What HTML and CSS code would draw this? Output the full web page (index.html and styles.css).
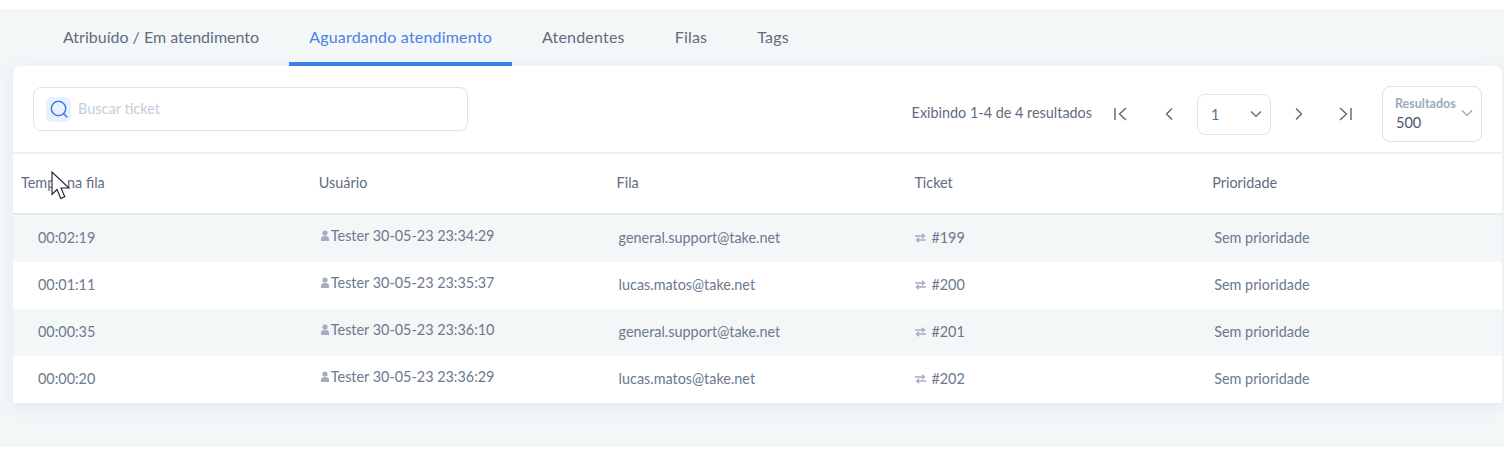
FILE: index.html
```html
<!DOCTYPE html>
<html lang="pt-BR">
<head>
<meta charset="utf-8">
<title>Tickets</title>
<link rel="stylesheet" href="styles.css">
</head>
<body>
<main class="page">
  <nav class="tabs">
    <a class="tab tab-first">Atribuído / Em atendimento</a>
    <a class="tab active">Aguardando atendimento</a>
    <a class="tab">Atendentes</a>
    <a class="tab">Filas</a>
    <a class="tab">Tags</a>
  </nav>
  <section class="card">
    <div class="toolbar">
      <label class="search">
        <span class="search-icon"><svg width="20" height="20" viewBox="0 0 20 20" fill="none" stroke="#3f7de8" stroke-width="1.5"><circle cx="9.5" cy="9.5" r="7.2"/><path d="M14.7 14.7 18 18" stroke-linecap="round"/></svg></span>
        <span class="placeholder">Buscar ticket</span>
      </label>
      <div class="pager">
        <span class="count">Exibindo 1-4 de 4 resultados</span>
        <svg class="pg first" width="16" height="16" viewBox="0 0 16 16" fill="none" stroke="#56657a" stroke-width="1.4"><path d="M2 2v12M13 2 6.500 8l6.500 6"/></svg>
        <svg class="pg prev" width="16" height="16" viewBox="0 0 16 16" fill="none" stroke="#56657a" stroke-width="1.4"><path d="M11 2.500 5.500 8l5.500 5.500"/></svg>
        <div class="page-select"><span>1</span><svg width="12" height="8" viewBox="0 0 12 8" fill="none" stroke="#56657a" stroke-width="1.200"><path d="m1 1.500 5 5 5-5"/></svg></div>
        <svg class="pg next" width="16" height="16" viewBox="0 0 16 16" fill="none" stroke="#56657a" stroke-width="1.4"><path d="m5 2.500 5.500 5.500L5 13.500"/></svg>
        <svg class="pg last" width="16" height="16" viewBox="0 0 16 16" fill="none" stroke="#56657a" stroke-width="1.4"><path d="M14 2v12M3 2l6.500 6L3 14"/></svg>
        <div class="results">
          <div class="results-text"><span class="results-label">Resultados</span><span class="results-value">500</span></div>
          <svg class="results-chevron" width="12" height="8" viewBox="0 0 12 8" fill="none" stroke="#8ea0b8" stroke-width="1.100"><path d="m1 1.500 5 5 5-5"/></svg>
        </div>
      </div>
    </div>
    <div class="thead">
      <div>Tempo na fila</div><div>Usuário</div><div>Fila</div><div>Ticket</div><div>Prioridade</div>
    </div>
    <div class="row">
      <div class="time">00:02:19</div>
      <div class="user"><svg class="uicon" width="10" height="11" viewBox="0 0 10 11" fill="#a3aec4"><circle cx="5" cy="3" r="2.600"/><path d="M1 11V8.500C1 6.800 2.500 6 5 6s4 .8 4 2.500V11z"/></svg>Tester 30-05-23 23:34:29</div>
      <div class="queue">general.support@take.net</div>
      <div class="ticket"><svg class="ticon" width="11" height="10" viewBox="0 0 11 10" fill="none" stroke="#a3aec4" stroke-width="1.400"><path d="M0 3h9M7 .8 9.400 3 7 5.200M11 7H2M4 4.800 1.600 7 4 9.200"/></svg>#199</div>
      <div class="prio">Sem prioridade</div>
    </div>
    <div class="row">
      <div class="time">00:01:11</div>
      <div class="user"><svg class="uicon" width="10" height="11" viewBox="0 0 10 11" fill="#a3aec4"><circle cx="5" cy="3" r="2.600"/><path d="M1 11V8.500C1 6.800 2.500 6 5 6s4 .8 4 2.500V11z"/></svg>Tester 30-05-23 23:35:37</div>
      <div class="queue">lucas.matos@take.net</div>
      <div class="ticket"><svg class="ticon" width="11" height="10" viewBox="0 0 11 10" fill="none" stroke="#a3aec4" stroke-width="1.400"><path d="M0 3h9M7 .8 9.400 3 7 5.200M11 7H2M4 4.800 1.600 7 4 9.200"/></svg>#200</div>
      <div class="prio">Sem prioridade</div>
    </div>
    <div class="row">
      <div class="time">00:00:35</div>
      <div class="user"><svg class="uicon" width="10" height="11" viewBox="0 0 10 11" fill="#a3aec4"><circle cx="5" cy="3" r="2.600"/><path d="M1 11V8.500C1 6.800 2.500 6 5 6s4 .8 4 2.500V11z"/></svg>Tester 30-05-23 23:36:10</div>
      <div class="queue">general.support@take.net</div>
      <div class="ticket"><svg class="ticon" width="11" height="10" viewBox="0 0 11 10" fill="none" stroke="#a3aec4" stroke-width="1.400"><path d="M0 3h9M7 .8 9.400 3 7 5.200M11 7H2M4 4.800 1.600 7 4 9.200"/></svg>#201</div>
      <div class="prio">Sem prioridade</div>
    </div>
    <div class="row">
      <div class="time">00:00:20</div>
      <div class="user"><svg class="uicon" width="10" height="11" viewBox="0 0 10 11" fill="#a3aec4"><circle cx="5" cy="3" r="2.600"/><path d="M1 11V8.500C1 6.800 2.500 6 5 6s4 .8 4 2.500V11z"/></svg>Tester 30-05-23 23:36:29</div>
      <div class="queue">lucas.matos@take.net</div>
      <div class="ticket"><svg class="ticon" width="11" height="10" viewBox="0 0 11 10" fill="none" stroke="#a3aec4" stroke-width="1.400"><path d="M0 3h9M7 .8 9.400 3 7 5.200M11 7H2M4 4.800 1.600 7 4 9.200"/></svg>#202</div>
      <div class="prio">Sem prioridade</div>
    </div>
  </section>
  <svg class="cursor" width="19" height="29" viewBox="0 0 19 29"><path d="M1 1v22.500l5-5 3.800 9 4-1.800-3.800-8.700H18z" fill="#fff" stroke="#1c2026" stroke-width="1.100" stroke-linejoin="miter"/></svg>
</main>
</body>
</html>
```

FILE: styles.css
```css
* { box-sizing: border-box; }
html, body { margin: 0; background: #fff; }
body {
  padding: 9px 0 2px;
  height: 449px;
  overflow: hidden;
  font-family: "Lato", "Noto Sans", sans-serif;
  color: #5f6d80;
}
.page {
  position: relative;
  height: 438px;
  background: #f4f7f8;
  padding: 0 2px 0 13px;
}
.tabs {
  display: flex;
  height: 57px;
  padding-left: 30px;
  align-items: stretch;
}
.tab {
  padding: 18px 20px 0;
  font-size: 16px;
  line-height: 20px;
  letter-spacing: .2px;
  color: #5f6d80;
  margin-right: 10px;
}
.tab-first { letter-spacing: 0; }
.tab.active {
  color: #4c7fe8;
  border-bottom: 4px solid #3f7de8;
}
.card {
  background: #fff;
  border-radius: 8px 8px 0 0;
  box-shadow: 0 4px 16px rgba(190, 205, 225, .35);
}
.toolbar {
  height: 88px;
  display: flex;
  align-items: center;
  justify-content: space-between;
  padding: 0 20px;
  border-bottom: 2px solid #eef1f5;
}
.search {
  width: 435px;
  height: 44px;
  border: 1px solid #d9e4ec;
  border-radius: 8px;
  display: flex;
  align-items: center;
  padding-left: 12px;
}
.search-icon {
  width: 25px;
  height: 25px;
  border-radius: 6px;
  background: #e8f1fd;
  display: flex;
  align-items: center;
  justify-content: center;
}
.placeholder { margin: -2px 0 0 7px; font-size: 14.500px; color: #c3ced9; }
.pager { display: flex; align-items: center; margin-top: 10px; }
.count { font-size: 14.400px; margin: -4px 21px 0 0; }
.pg { flex: none; }
.prev { margin-left: 32px; }
.page-select {
  width: 74px;
  height: 41px;
  border: 1px solid #d9e4ec;
  border-radius: 8px;
  margin-left: 20px;
  padding: 0 8px 0 13px;
  display: flex;
  align-items: center;
  justify-content: space-between;
  font-size: 14.500px;
}
.next { margin-left: 20px; }
.last { margin-left: 30px; }
.results {
  width: 100px;
  height: 56px;
  margin-left: 29px;
  border: 1px solid #d9e4ec;
  border-radius: 8px;
  padding: 0 8px 0 13px;
  display: flex;
  align-items: center;
  justify-content: space-between;
}
.results-text { display: flex; flex-direction: column; }
.results-label { font-size: 12.500px; font-weight: 700; color: #9aa9bd; line-height: 18px; margin: -1px 0 0 -1px; }
.results-value { font-size: 14.500px; line-height: 20px; color: #4a586b; }
.results-chevron { margin-top: -2px; }
.thead, .row {
  display: grid;
  grid-template-columns: repeat(5, 1fr);
  font-size: 14.400px;
  align-items: center;
}
.thead {
  height: 61px;
  padding-bottom: 3px;
  border-bottom: 2px solid #e6ebf0;
}
.thead > div { padding-left: 8px; }
.row { height: 47px; padding-bottom: 2px; color: #6b7a8d; }
.row:nth-of-type(odd) { background: #f4f7f8; }
.time { padding-left: 25px; }
.user { padding-left: 9px; margin-top: -4px; }
.queue { padding-left: 10px; }
.ticket { padding-left: 9px; }
.prio { padding-left: 10px; }
.uicon { margin-right: 1px; }
.ticon { margin-right: 5px; }
.cursor { position: absolute; left: 51px; top: 162px; }
```
